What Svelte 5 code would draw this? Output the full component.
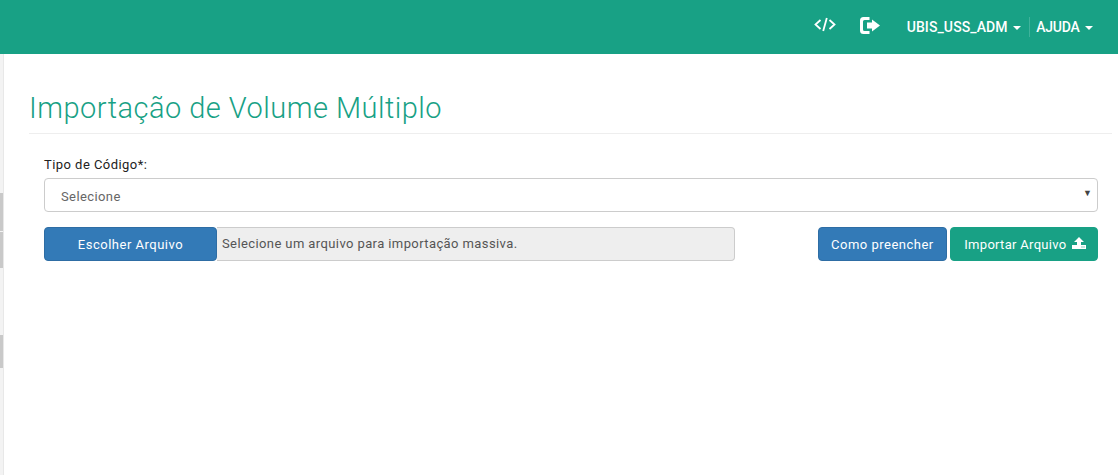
<script>
	let tipo = $state("");
</script>

<header class="topbar">
	<a class="icon-link code" href="#code" aria-label="Código">
		<svg width="22" height="15" viewBox="0 0 22 15" fill="none" stroke="currentColor" stroke-width="1.8">
			<path d="M6.500 3 1.500 7.500l5 4.500M15.500 3l5 4.500-5 4.500M12.800 1 9.200 14" />
		</svg>
	</a>
	<a class="icon-link logout" href="#sair" aria-label="Sair">
		<svg width="20" height="17" viewBox="0 0 20 17" fill="currentColor">
			<path d="M3.500 0H9.500v3H4.500A1.500 1.500 0 0 0 3 4.500v8A1.500 1.500 0 0 0 4.500 14H9.500v3H3.500A3.500 3.500 0 0 1 0 13.500v-10A3.500 3.500 0 0 1 3.500 0Z" />
			<path d="M12 2.500 20 8.500l-8 6v-3H7v-6h5Z" />
		</svg>
	</a>
	<a class="menu user" href="#user">UBIS_USS_ADM <span class="caret"></span></a>
	<span class="sep"></span>
	<a class="menu help" href="#ajuda">AJUDA <span class="caret"></span></a>
</header>

<div class="layout">
	<aside class="rail">
		<span class="notch n1"></span>
		<span class="notch n2"></span>
		<span class="notch n3"></span>
	</aside>

	<main class="content">
		<h1>Importação de Volume Múltiplo</h1>

		<form class="form">
			<label for="tipo">Tipo de Código*:</label>
			<div class="select-wrap">
				<select id="tipo" bind:value={tipo}>
					<option value="">Selecione</option>
				</select>
				<span class="arrow">▼</span>
			</div>

			<div class="actions">
				<div class="file">
					<button type="button" class="btn blue choose">Escolher Arquivo</button>
					<span class="file-name">Selecione um arquivo para importação massiva.</span>
				</div>
				<div class="buttons">
					<button type="button" class="btn blue">Como preencher</button>
					<button type="button" class="btn green">
						Importar Arquivo
						<svg width="14" height="12" viewBox="0 0 14 12" fill="currentColor" fill-rule="evenodd">
							<path d="M7 0 12 5H9v3H5V5H2Z" />
							<path d="M0 8h14v4H0ZM9.500 9.500v1h1v-1ZM11.500 9.500v1h1v-1Z" />
						</svg>
					</button>
				</div>
			</div>
		</form>
	</main>
</div>

<style>
	:global(body) {
		background: #fff;
		font-family: "Roboto", "Liberation Sans", sans-serif;
		color: #333;
	}

	.topbar {
		height: 54px;
		background: #18a185;
		color: #fff;
		display: flex;
		align-items: center;
		justify-content: flex-end;
		padding-right: 25px;
	}

	.topbar a {
		color: #fff;
		text-decoration: none;
	}

	.icon-link {
		display: flex;
	}

	.code {
		margin-right: 24px;
		margin-bottom: 5px;
	}

	.logout {
		margin-right: 27px;
		margin-bottom: 3px;
	}

	.menu {
		font-size: 14px;
		font-weight: 500;
		white-space: nowrap;
	}

	.user {
		letter-spacing: 0.1px;
	}

	.help {
		letter-spacing: -0.2px;
	}

	.caret {
		display: inline-block;
		width: 0;
		height: 0;
		margin-left: 2px;
		vertical-align: middle;
		border-top: 4px solid #fff;
		border-left: 4px solid transparent;
		border-right: 4px solid transparent;
	}

	.sep {
		width: 1px;
		height: 20px;
		background: #3fb29b;
		margin: 0 6px 0 8px;
	}

	.layout {
		display: flex;
		height: 421px;
	}

	.rail {
		width: 3px;
		background: #f3f3f3;
		border-right: 1px solid #e8e8e8;
		position: relative;
	}

	.notch {
		position: absolute;
		left: 0;
		width: 3px;
		background: #c9c9c9;
	}

	.n1 { top: 139px; height: 38px; }
	.n2 { top: 178px; height: 36px; }
	.n3 { top: 281px; height: 33px; }

	.content {
		flex: 1;
		padding: 37px 6px 0 25px;
		min-width: 0;
	}

	h1 {
		margin: 0;
		font-size: 29px;
		font-weight: 300;
		line-height: 34px;
		letter-spacing: 0.48px;
		color: #18a185;
		padding-bottom: 8px;
		border-bottom: 1px solid #eee;
	}

	.form {
		padding: 0 14px 0 15px;
	}

	label {
		display: block;
		margin-top: 22px;
		font-size: 13px;
		font-weight: 400;
		letter-spacing: 0.45px;
		line-height: 18px;
		color: #222;
	}

	.select-wrap {
		position: relative;
		margin-top: 4px;
	}

	select {
		display: block;
		width: 100%;
		height: 34px;
		padding: 3px 16px 0;
		appearance: none;
		background: #fff;
		border: 1px solid #ccc;
		border-radius: 4px;
		font: inherit;
		font-size: 13px;
		letter-spacing: 0.4px;
		color: #666;
	}

	.arrow {
		position: absolute;
		right: 6px;
		top: 10px;
		font-size: 9px;
		color: #444;
		pointer-events: none;
	}

	.actions {
		display: flex;
		justify-content: space-between;
		margin-top: 15px;
	}

	.file {
		display: flex;
		width: 691px;
	}

	.file-name {
		flex: 1;
		height: 34px;
		box-sizing: border-box;
		line-height: 32px;
		padding-left: 5px;
		background: #eee;
		border: 1px solid #ccc;
		border-left: 0;
		border-radius: 0 4px 4px 0;
		font-size: 13px;
		letter-spacing: 0.4px;
		color: #555;
		white-space: nowrap;
	}

	.buttons {
		display: flex;
		gap: 3px;
	}

	.btn {
		height: 34px;
		padding: 1px 12.5px 0;
		border: 1px solid transparent;
		border-radius: 4px;
		font: inherit;
		font-size: 13px;
		color: #fff;
		white-space: nowrap;
	}

	.blue {
		background: #337ab7;
		border-color: #2e6da4;
		letter-spacing: 0.5px;
	}

	.green {
		background: #18a185;
		border-color: #18a185;
		letter-spacing: 0.3px;
		padding: 1px 11px 0 13px;
	}

	.green svg {
		margin-left: 2px;
	}

	.choose {
		width: 173px;
	}
</style>
